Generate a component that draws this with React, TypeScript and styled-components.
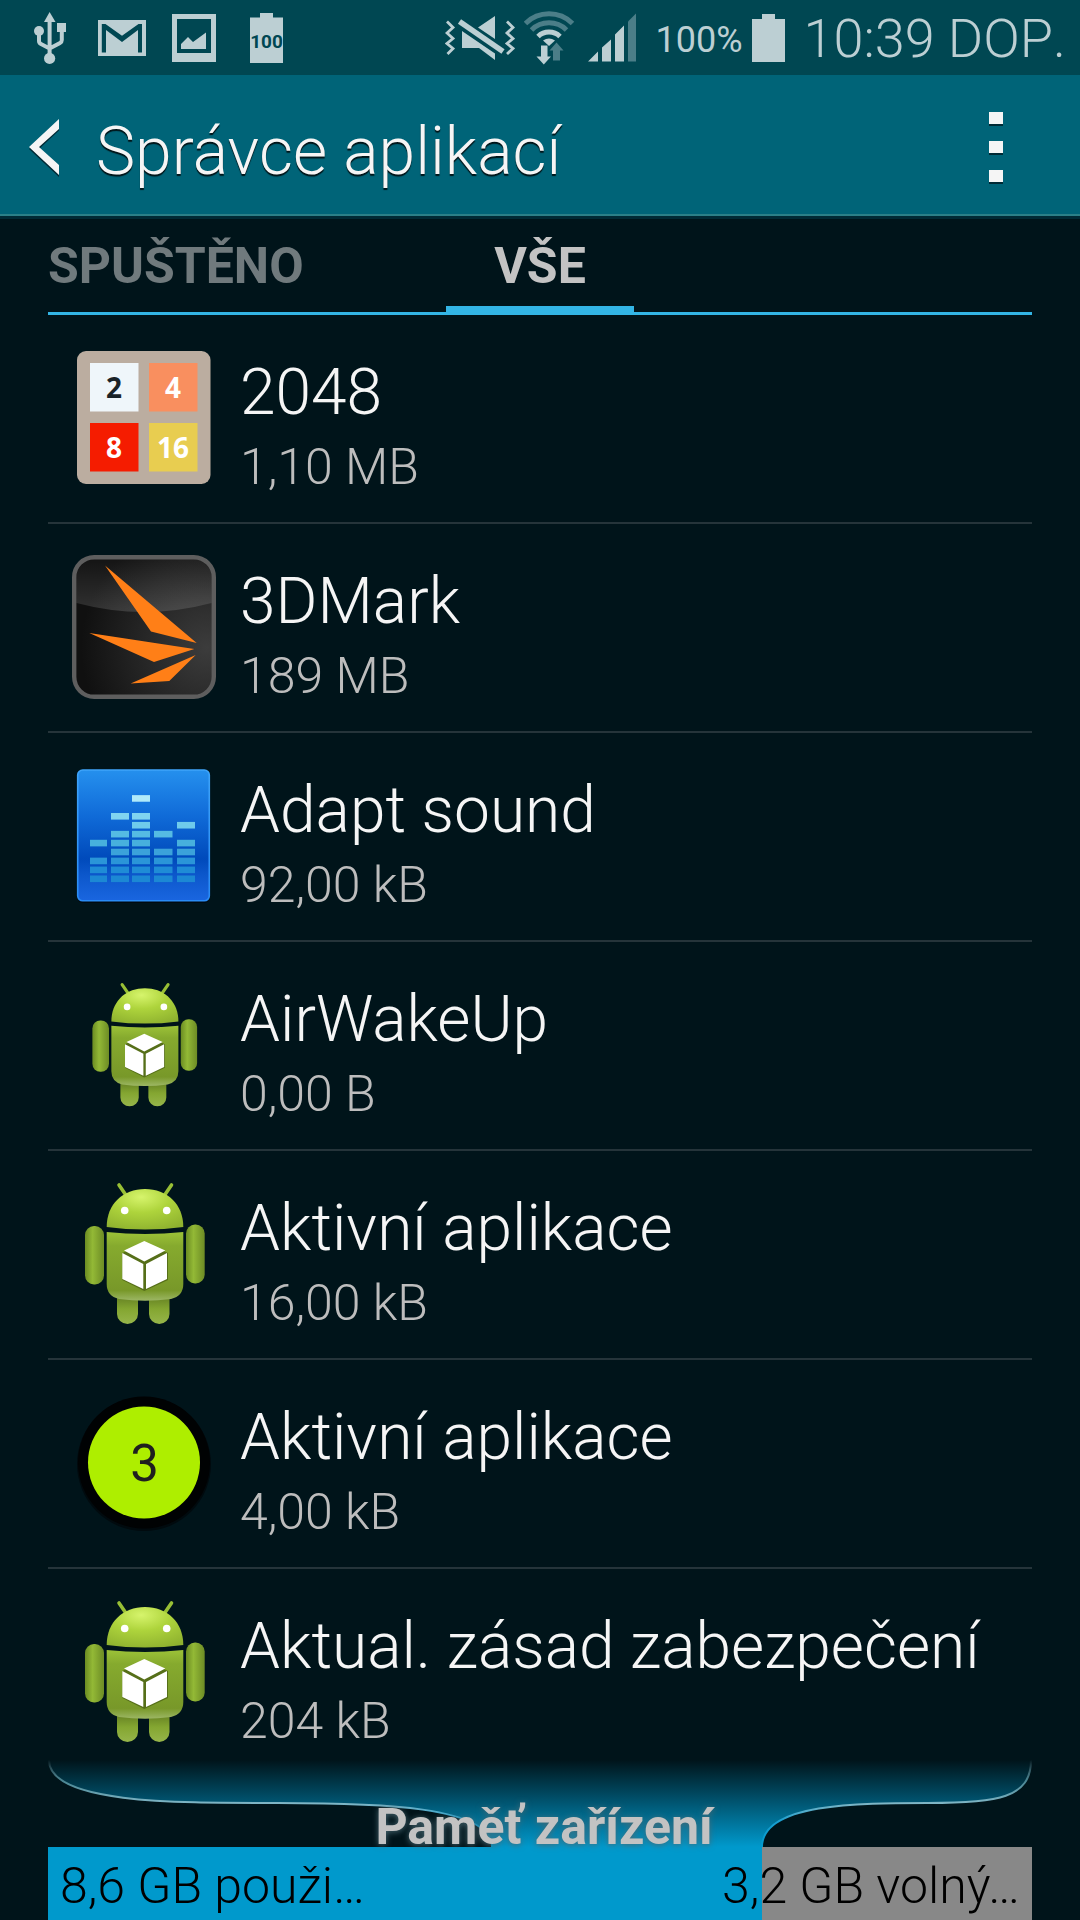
import React from "react";
import styled, { createGlobalStyle } from "styled-components";

const Global = createGlobalStyle`
  *, *::before, *::after { box-sizing: border-box; }
  body {
    margin: 0;
    background: #00141a;
    font-family: Roboto, "Noto Sans", sans-serif;
  }
  button { font: inherit; color: inherit; background: none; border: 0; padding: 0; cursor: pointer; }
  svg { display: block; flex: none; }
`;

const tint = "#bccfd3";
const dim = "#4b7e88";

const Screen = styled.div`
  display: flex;
  flex-direction: column;
  height: 100vh;
  overflow: hidden;
  background: #00141a;
  color: #f5f5f5;
`;

const StatusBar = styled.header`
  display: flex;
  align-items: center;
  justify-content: space-between;
  flex: none;
  height: 75px;
  padding: 0 14px;
  background: #004752;
  color: ${tint};
`;

const Notifications = styled.div`
  display: grid;
  grid-auto-flow: column;
  grid-auto-columns: 72px;
  align-items: center;
  justify-items: center;
`;

const SystemInfo = styled.div`
  display: flex;
  align-items: center;
  gap: 9px;
  font-weight: 300;
`;

const Charge = styled.span`
  padding: 4px 0 0 10px;
  font-size: 36px;
  font-weight: 400;
  line-height: 42px;
`;

const Clock = styled.time`
  padding: 2px 0 0 10px;
  font-size: 54px;
  line-height: 64px;
  font-kerning: none;
`;

const ActionBar = styled.div`
  display: flex;
  align-items: center;
  flex: none;
  height: 141px;
  padding: 4px 64px 0 29px;
  background: #006478;
  border-bottom: 2px solid #2b8088;
  box-shadow: 0 3px 0 #002a35;
`;

const BackButton = styled.button`
  display: flex;
  padding-right: 36px;
`;

const Title = styled.h1`
  flex: 1;
  margin: 0;
  padding-top: 10px;
  font-size: 66px;
  line-height: 78px;
  font-weight: 300;
  text-shadow: 0 2px 1px #001418;
`;

const MenuButton = styled.button`
  display: grid;
  gap: 17px;
  padding: 0 13px;
`;

const MenuDot = styled.span`
  width: 14px;
  height: 12px;
  background: #f5f5f5;
  box-shadow: 0 2px 0 #002a35;
`;

const Tabs = styled.nav`
  display: grid;
  grid-template-columns: 1fr auto 1fr;
  flex: none;
  height: 99px;
  margin: 0 48px;
  border-bottom: 3px solid #33b5e5;
`;

const Tab = styled.button<{ $active?: boolean }>`
  justify-self: ${(p) => (p.$active ? "center" : "start")};
  padding: ${(p) => (p.$active ? "10px 48px 0" : "10px 0 0")};
  border-bottom: 6px solid ${(p) => (p.$active ? "#33b5e5" : "transparent")};
  color: ${(p) => (p.$active ? "#c3c3c3" : "#707a7d")};
  font-size: 50px;
  line-height: 60px;
  font-weight: 700;
`;

const AppList = styled.ul`
  flex: 1;
  min-height: 0;
  margin: 0 48px;
  padding: 0;
  overflow: hidden;
  list-style: none;
`;

const AppItem = styled.li`
  border-bottom: 2px solid #25343a;
`;

const AppButton = styled.button`
  display: flex;
  align-items: center;
  gap: 24px;
  width: 100%;
  height: 207px;
  padding: 0 24px 2px;
  text-align: left;
`;

const IconSlot = styled.span`
  display: grid;
  place-items: center;
  flex: none;
  width: 144px;
  height: 144px;
`;

const AppText = styled.span`
  display: grid;
  gap: 2px;
  padding-top: 12px;
  font-weight: 300;
  white-space: nowrap;
`;

const AppName = styled.span`
  font-size: 64px;
  line-height: 84px;
`;

const AppSize = styled.span`
  font-size: 50px;
  line-height: 60px;
  color: #bdbdbd;
`;

const Storage = styled.footer`
  flex: none;
  margin: 0 48px;
`;

const Funnel = styled.div`
  display: grid;
  height: 87px;
  > * { grid-area: 1 / 1; }
`;

const FunnelShape = styled.svg`
  width: 100%;
  height: 87px;
`;

const StorageLabel = styled.h2`
  z-index: 1;
  margin: 0;
  padding: 47px 0 0 8px;
  font-size: 50px;
  line-height: 40px;
  font-weight: 700;
  text-align: center;
  color: #c3c3c3;
  text-shadow: 0 1px 6px #4a6a74;
`;

const StorageBar = styled.div<{ $used: number }>`
  display: flex;
  justify-content: space-between;
  height: 73px;
  padding: 9px 12px 0;
  background: linear-gradient(to right, #0099cc ${(p) => p.$used}%, #888888 ${(p) => p.$used}%);
  color: #000;
  font-size: 50px;
  line-height: 60px;
  font-weight: 300;
  white-space: nowrap;
`;

const UsbIcon = () => (
  <svg width="32" height="52" viewBox="34 13 32 52" fill={tint}>
    <path d="M49.6 13 55.5 23H44z" />
    <path d="M49.6 20V58M39 32V42Q39 44 41 45L49.6 49.5M61.8 30V41Q61.8 43 60 44L49.6 49.5" fill="none" stroke={tint} strokeWidth="4" />
    <circle cx="39" cy="32" r="5" />
    <path d="M57 24h9v9h-9z" />
    <circle cx="49.6" cy="59.4" r="5.6" />
  </svg>
);

const MailIcon = () => (
  <svg width="48" height="36" viewBox="98 20 48 36">
    <path d="M98 20h48v36H98z" fill={tint} />
    <path d="M101.800 52.500V24H105.500L122 35.700 138.500 24H142V52.500H138V30L122 42 106 30V52.500z" fill="#004752" />
  </svg>
);

const PictureIcon = () => (
  <svg width="44" height="48" viewBox="172 15 44 48" fill={tint}>
    <path fillRule="evenodd" d="M172 15h44v48h-44zM177 20v34h34V20z" />
    <path d="M181 50v-5l7-7 5 5 13-9.500V50z" />
  </svg>
);

const BatteryLevelIcon = () => (
  <svg width="33" height="50" viewBox="250 14 33 50">
    <path d="M260 14h13v4.500h10V64h-33V18.500h10z" fill={tint} />
    <text x="266.500" y="49" fontSize="19" fontWeight="700" fontFamily="'Liberation Sans Narrow', Roboto, sans-serif" textAnchor="middle" fill="#004752">100</text>
  </svg>
);

const MuteIcon = () => (
  <svg width="70" height="46" viewBox="448 15 70 46" fill={tint}>
    <path d="M481 27.500 498 16v23zM465 31l33 22.500V60L482 48H465z" />
    <path d="M462.500 21.500 506 51.500" stroke={tint} strokeWidth="5.500" />
    <path d="M450 21.500 456 27.500 450 33 456 38.500 450 43.500 456 48.500 450.500 54M510 21.500 516 27.500 510 33 516 38.500 510 43.500 516 48.500 510 54" fill="none" stroke={tint} strokeWidth="2.800" />
  </svg>
);

const WifiIcon = () => (
  <svg width="54" height="54" viewBox="527.500 10.500 54 54" fill="none" strokeWidth="5">
    <path d="M529 23A33.500 33.500 0 0 1 576 23M535 29.500A25 25 0 0 1 570 29.500" stroke={dim} />
    <path d="M541.500 36A16 16 0 0 1 563.500 36" stroke={tint} />
    <path d="M546.500 40Q552.500 36 558.500 40L552.500 45.500z" fill={tint} />
    <path d="M544.500 45h6.500v11h3.500L547.300 64 540 56h4.500z" fill={tint} />
    <path d="M560 42 567 50h-3.500v10H556.500V50H553z" fill={dim} />
  </svg>
);

const SignalIcon = () => (
  <svg width="49" height="49" viewBox="590 13.500 49 49" fill={tint}>
    <path d="M591 62 601 52V62zM605 62V48L614 40V62zM618 62V35L627 26V62z" />
    <path d="M631 62V22L639 14V62z" fill={dim} />
  </svg>
);

const BatteryIcon = () => (
  <svg width="33" height="48" viewBox="752 13 33 48">
    <path d="M762 13h13v5h10V61h-33V18h10z" fill={tint} />
  </svg>
);

const TilesIcon = () => {
  const tiles = [
    { n: "2", x: 18, y: 17, fill: "#eff6fa", ink: "#1a2328" },
    { n: "4", x: 77, y: 17, fill: "#f98f5f", ink: "#fff" },
    { n: "8", x: 18, y: 77, fill: "#f51c00", ink: "#fff" },
    { n: "16", x: 77, y: 77, fill: "#e8cd50", ink: "#fff" },
  ];
  return (
    <svg width="144" height="144" viewBox="0 0 144 144">
      <rect x="5" y="5" width="133.500" height="133" rx="9" fill="#bbada0" />
      {tiles.map((t) => (
        <g key={t.n}>
          <rect x={t.x} y={t.y} width="48.500" height="48.500" fill={t.fill} />
          <text x={t.x + 24} y={t.y + 35} fontSize="28" fontWeight="700" fontFamily="'Open Sans', sans-serif" textAnchor="middle" fill={t.ink}>{t.n}</text>
        </g>
      ))}
    </svg>
  );
};

const WingIcon = () => (
  <svg width="144" height="144" viewBox="0 0 144 144">
    <defs>
      <radialGradient id="wingBase" cx="0.95" cy="0.65" r="0.9">
        <stop offset="0" stopColor="#3c3c3c" />
        <stop offset="0.6" stopColor="#222" />
        <stop offset="1" stopColor="#101010" />
      </radialGradient>
      <linearGradient id="wingGloss" x1="0" y1="0" x2="0" y2="1">
        <stop offset="0" stopColor="#fff" stopOpacity="0.02" />
        <stop offset="1" stopColor="#fff" stopOpacity="0.14" />
      </linearGradient>
    </defs>
    <rect x="2.200" y="2.200" width="139.600" height="139.600" rx="20" fill="url(#wingBase)" stroke="#5e5e5e" strokeWidth="4.400" />
    <path d="M4.500 48V22A18 18 0 0 1 22 4.500H122A18 18 0 0 1 139.500 22V48Q72 66 4.500 48z" fill="url(#wingGloss)" />
    <path d="M33 10.500 124.700 88 79 76.500zM17.300 78 122.300 94 82 107zM123.700 100 97.300 126 58.700 128.500z" fill="#ff7f17" />
  </svg>
);

const EqualizerIcon = () => {
  const columns = [
    { x: 18, w: 17, rows: [0, 1, 2, 4] },
    { x: 39, w: 18, rows: [0, 1, 2, 3, 4, 5, 7] },
    { x: 60, w: 18, rows: [0, 1, 2, 3, 4, 5, 6, 7, 9] },
    { x: 82, w: 18.5, rows: [0, 1, 2, 3, 5] },
    { x: 105, w: 18, rows: [0, 1, 2, 3, 4, 6] },
  ];
  const shades = ["#1c88d4", "#1f8cd6", "#2a95d8", "#3ba2da", "#47b0dd", "#55bbe3", "#6fcbeb", "#80d4f0", "#98dff5", "#b0eafa"];
  return (
    <svg width="144" height="144" viewBox="0 0 144 144">
      <defs>
        <linearGradient id="eqBase" x1="0" y1="0" x2="0" y2="1">
          <stop offset="0" stopColor="#2590ee" />
          <stop offset="0.35" stopColor="#106bd8" />
          <stop offset="0.68" stopColor="#004abb" />
          <stop offset="0.8" stopColor="#0c57cb" />
          <stop offset="1" stopColor="#1a66e0" />
        </linearGradient>
        <linearGradient id="eqEdge" x1="0" y1="0" x2="0" y2="1">
          <stop offset="0" stopColor="#3ea4fa" />
          <stop offset="1" stopColor="#2a8cf6" />
        </linearGradient>
      </defs>
      <rect x="5" y="7" width="133" height="132" rx="6" fill="#000a10" />
      <rect x="5.700" y="6" width="131.600" height="130.800" rx="5" fill="url(#eqBase)" stroke="url(#eqEdge)" strokeWidth="1.600" />
      {columns.map((c) => c.rows.map((r) => (
        <rect key={`${c.x}-${r}`} x={c.x} y={111.5 - r * 8.93} width={c.w} height="6.600" fill={shades[r]} />
      )))}
    </svg>
  );
};

const RobotIcon = ({ size = 144 }: { size?: number }) => (
  <svg width={size} height={size} viewBox="0 0 144 144">
    <defs>
      <radialGradient id="robotHead" cx="0.45" cy="0.2" r="0.85">
        <stop offset="0" stopColor="#d6f46c" />
        <stop offset="0.45" stopColor="#aed43c" />
        <stop offset="1" stopColor="#8fb22f" />
      </radialGradient>
      <linearGradient id="robotBody" x1="0" y1="0" x2="0" y2="1">
        <stop offset="0" stopColor="#9cc238" />
        <stop offset="0.2" stopColor="#86aa2e" />
        <stop offset="0.85" stopColor="#789829" />
        <stop offset="1" stopColor="#9db765" />
      </linearGradient>
      <linearGradient id="robotLimb" x1="0" y1="0" x2="1" y2="0">
        <stop offset="0" stopColor="#6b8c22" />
        <stop offset="0.4" stopColor="#93b936" />
        <stop offset="1" stopColor="#6d8c25" />
      </linearGradient>
      <linearGradient id="robotLeg" x1="0" y1="0" x2="0" y2="1">
        <stop offset="0" stopColor="#5f7a20" />
        <stop offset="0.5" stopColor="#84a631" />
        <stop offset="1" stopColor="#96b54a" />
      </linearGradient>
    </defs>
    <path d="M47 3 53.500 12.500M99.500 3 93 12.500" stroke="#98bf35" strokeWidth="3.600" strokeLinecap="round" />
    <path d="M45 112H66V132A10.500 10 0 0 1 45 132zM77 112H97.500V132A10.250 10 0 0 1 77 132z" fill="url(#robotLeg)" />
    <rect x="13" y="44" width="19" height="58.500" rx="9" fill="url(#robotLimb)" />
    <rect x="114" y="42.500" width="18.700" height="59" rx="9" fill="url(#robotLimb)" />
    <path d="M34.700 45C34.700 22 51 7 73 7S111.300 22 111.300 45Q73 50 34.700 45z" fill="url(#robotHead)" />
    <path d="M34.700 50Q73 54 111.300 50V102Q111.300 114 99 117Q73 120.500 47 117Q34.700 114 34.700 102z" fill="url(#robotBody)" />
    <circle cx="52.700" cy="28.500" r="3.800" fill="#fff" />
    <circle cx="94.700" cy="28.500" r="3.800" fill="#fff" />
    <path d="M72.300 60 96 71V98L72.300 109 50.300 98V71z" fill="#566f19" />
    <path d="M72.300 59 93.300 68.500 72.300 79.500 52 68.500zM50.300 71 71.300 82V107L50.300 97zM74 82 95 71V97L74 107z" fill="#fff" />
  </svg>
);

const CounterIcon = () => (
  <svg width="144" height="144" viewBox="0 0 144 144">
    <circle cx="72" cy="73" r="67" fill="#000a0e" />
    <circle cx="72" cy="71.500" r="66" fill="#000203" />
    <circle cx="72" cy="71.500" r="56" fill="#aeee00" />
    <text x="72.500" y="90" fontSize="51" textAnchor="middle" fill="#1f1f1f">3</text>
  </svg>
);

const apps = [
  { name: "2048", size: "1,10 MB", icon: <TilesIcon /> },
  { name: "3DMark", size: "189 MB", icon: <WingIcon /> },
  { name: "Adapt sound", size: "92,00 kB", icon: <EqualizerIcon /> },
  { name: "AirWakeUp", size: "0,00 B", icon: <RobotIcon size={126} /> },
  { name: "Aktivní aplikace", size: "16,00 kB", icon: <RobotIcon /> },
  { name: "Aktivní aplikace", size: "4,00 kB", icon: <CounterIcon /> },
  { name: "Aktual. zásad zabezpečení", size: "204 kB", icon: <RobotIcon /> },
];

export default function App() {
  return (
    <Screen>
      <Global />
      <StatusBar>
        <Notifications>
          <UsbIcon />
          <MailIcon />
          <PictureIcon />
          <BatteryLevelIcon />
        </Notifications>
        <SystemInfo>
          <MuteIcon />
          <WifiIcon />
          <SignalIcon />
          <Charge>100%</Charge>
          <BatteryIcon />
          <Clock>10:39 DOP.</Clock>
        </SystemInfo>
      </StatusBar>
      <ActionBar>
        <BackButton aria-label="Zpět">
          <svg width="31" height="60" viewBox="0 0 31 60">
            <path d="M30 4V13.500L10 32 30 50V60L0 32z" fill="#002a35" />
            <path d="M30 2V12L10 30 30 48V58L0 30z" fill="#f5f5f5" />
          </svg>
        </BackButton>
        <Title>Správce aplikací</Title>
        <MenuButton aria-label="Další možnosti">
          <MenuDot />
          <MenuDot />
          <MenuDot />
        </MenuButton>
      </ActionBar>
      <Tabs>
        <Tab>SPUŠTĚNO</Tab>
        <Tab $active aria-current="page">VŠE</Tab>
      </Tabs>
      <AppList>
        {apps.map((app, i) => (
          <AppItem key={i}>
            <AppButton>
              <IconSlot>{app.icon}</IconSlot>
              <AppText>
                <AppName>{app.name}</AppName>
                <AppSize>{app.size}</AppSize>
              </AppText>
            </AppButton>
          </AppItem>
        ))}
      </AppList>
      <Storage>
        <Funnel>
          <FunnelShape viewBox="0 0 984 87" preserveAspectRatio="none">
            <defs>
              <linearGradient id="flow" x1="0" y1="0" x2="0" y2="1">
                <stop offset="0" stopColor="#0099cc" stopOpacity="0" />
                <stop offset="0.5" stopColor="#0099cc" stopOpacity="0.5" />
                <stop offset="1" stopColor="#0099cc" />
              </linearGradient>
              <linearGradient id="rim" gradientUnits="userSpaceOnUse" x1="0" y1="0" x2="0" y2="87">
                <stop offset="0" stopColor="#8aa4aa" stopOpacity="0" />
                <stop offset="0.25" stopColor="#4c8794" />
                <stop offset="0.5" stopColor="#7fb6c6" />
                <stop offset="0.7" stopColor="#1a9fd0" />
                <stop offset="1" stopColor="#0099cc" />
              </linearGradient>
            </defs>
            <path d="M0 0C0 44 130 43 230 43S444 46 444 87H714C714 43 810 43 880 43S984 38 984 0z" fill="url(#flow)" />
            <path d="M1 0C1 44 130 43 230 43S444 46 444 87M714 87C714 43 810 43 880 43S983 38 983 0" fill="none" stroke="url(#rim)" strokeWidth="2" />
          </FunnelShape>
          <StorageLabel>Paměť zařízení</StorageLabel>
        </Funnel>
        <StorageBar $used={72.6}>
          <span>8,6 GB použi…</span>
          <span>3,2 GB volný…</span>
        </StorageBar>
      </Storage>
    </Screen>
  );
}
